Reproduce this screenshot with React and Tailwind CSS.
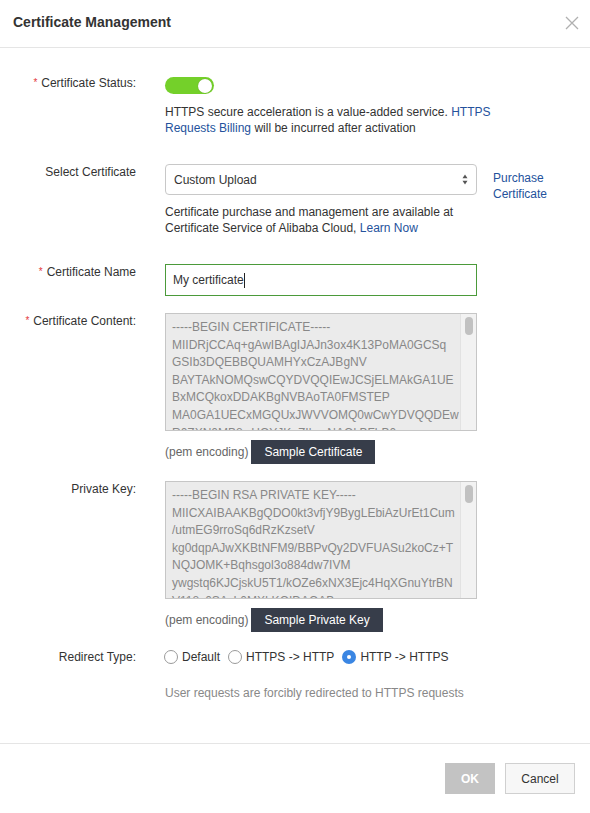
import React from "react";

const certLines = [
  "-----BEGIN CERTIFICATE-----",
  "MIIDRjCCAq+gAwIBAgIJAJn3ox4K13PoMA0GCSq",
  "GSIb3DQEBBQUAMHYxCzAJBgNV",
  "BAYTAkNOMQswCQYDVQQIEwJCSjELMAkGA1UE",
  "BxMCQkoxDDAKBgNVBAoTA0FMSTEP",
  "MA0GA1UECxMGQUxJWVVOMQ0wCwYDVQQDEw",
  "R0ZXN0MB8wHQYJKoZIhvcNAQkBFhB0",
];

const keyLines = [
  "-----BEGIN RSA PRIVATE KEY-----",
  "MIICXAIBAAKBgQDO0kt3vfjY9BygLEbiAzUrEt1Cum",
  "/utmEG9rroSq6dRzKzsetV",
  "kg0dqpAJwXKBtNFM9/BBPvQy2DVFUASu2koCz+T",
  "NQJOMK+Bqhsgol3o884dw7IVM",
  "ywgstq6KJCjskU5T1/kOZe6xNX3Ejc4HqXGnuYtrBN",
  "V118v0SAvL0MXLKQIDAQAB",
];

function Label({ children, required, className = "" }) {
  return (
    <div className={`w-[136px] shrink-0 text-right text-[12px] leading-[16px] text-[#333] ${className}`}>
      {required && <span className="text-[#e4393c] text-[10px] mr-[4px] align-top">*</span>}
      {children}
    </div>
  );
}

function CodeBox({ lines }) {
  return (
    <div className="relative w-[312px] h-[118px] border border-[#c6c6c6] bg-[#ebebeb] overflow-hidden">
      <div className="pl-[6px] pt-[5px] pr-[18px] text-[12px] leading-[17.6px] text-[#888] whitespace-nowrap">
        {lines.map((l, i) => (
          <div key={i}>{l}</div>
        ))}
      </div>
      <div className="absolute top-0 right-0 w-[16px] h-full bg-[#f2f2f2] border-l border-[#e2e2e2]">
        <div className="ml-[4px] mt-[3px] w-[8px] h-[18px] rounded-full bg-[#c1c1c1]" />
      </div>
    </div>
  );
}

function Radio({ checked, label }) {
  return (
    <label className="flex items-center gap-[4px]">
      {checked ? (
        <span className="w-[14px] h-[14px] rounded-full bg-[#3a86e3] flex items-center justify-center">
          <span className="w-[4px] h-[4px] rounded-full bg-white" />
        </span>
      ) : (
        <span className="w-[14px] h-[14px] rounded-full border border-[#9a9a9a] bg-white" />
      )}
      <span className="text-[12px] leading-[16px] text-[#333]">{label}</span>
    </label>
  );
}

export default function App() {
  return (
    <div className="w-[590px] h-[813px] bg-white flex flex-col font-['Liberation_Sans',Arial,sans-serif] text-[#333]">
      {/* Header */}
      <div className="h-[48px] shrink-0 border-b border-[#e5e5e5] flex items-center justify-between pl-[13px] pr-[11px] pb-[2px]">
        <div className="text-[14px] font-bold text-[#333]">Certificate Management</div>
        <svg width="14" height="14" viewBox="0 0 14 14" className="text-[#b0b0b0]">
          <path d="M1 1 L13 13 M13 1 L1 13" stroke="currentColor" strokeWidth="1.3" fill="none" />
        </svg>
      </div>

      {/* Body */}
      <div className="flex-1 pt-[29px]">
        {/* Certificate Status */}
        <div className="flex">
          <Label required className="-mt-[2px]">Certificate Status:</Label>
          <div className="ml-[29px] w-[330px]">
            <div className="w-[49px] h-[17px] rounded-full bg-[#74d02a] flex items-center justify-end pr-[2px]">
              <div className="w-[14px] h-[14px] rounded-full bg-white shadow-[0_0_1px_rgba(0,0,0,0.3)]" />
            </div>
            <div className="mt-[10px] text-[12px] leading-[16px] text-[#333]">
              HTTPS secure acceleration is a value-added service.{" "}
              <span className="text-[#24529c]">HTTPS Requests Billing</span> will be incurred after activation
            </div>
          </div>
        </div>

        {/* Select Certificate */}
        <div className="flex mt-[28px]">
          <Label>Select Certificate</Label>
          <div className="ml-[29px] w-[312px]">
            <div className="h-[31px] border border-[#c8c8c8] rounded-[4px] bg-white flex items-center justify-between pl-[8px] pr-[8px]">
              <span className="text-[12px] text-[#333]">Custom Upload</span>
              <svg width="6" height="11" viewBox="0 0 6 11">
                <path d="M3 0.5 L5.5 4.2 L0.5 4.2 Z" fill="#555" />
                <path d="M3 10.5 L5.5 6.8 L0.5 6.8 Z" fill="#555" />
              </svg>
            </div>
            <div className="mt-[9px] text-[12px] leading-[16px] text-[#333]">
              Certificate purchase and management are available at Certificate Service of Alibaba Cloud,{" "}
              <span className="text-[#24529c]">Learn Now</span>
            </div>
          </div>
          <div className="ml-[16px] mt-[6px] text-[12px] leading-[16px] text-[#24529c]">
            Purchase
            <br />
            Certificate
          </div>
        </div>

        {/* Certificate Name */}
        <div className="flex mt-[28px]">
          <Label required>Certificate Name</Label>
          <div className="ml-[29px]">
            <div className="w-[312px] h-[32px] border border-[#4b9a3a] bg-white flex items-center pl-[7px]">
              <span className="text-[12px] text-[#333]">My certificate</span>
              <span className="w-px h-[15px] bg-[#222]" />
            </div>
          </div>
        </div>

        {/* Certificate Content */}
        <div className="flex mt-[17px]">
          <Label required>Certificate Content:</Label>
          <div className="ml-[29px]">
            <CodeBox lines={certLines} />
            <div className="mt-[9px] flex items-center">
              <span className="text-[12px] text-[#666]">(pem encoding)</span>
              <button className="ml-[3px] h-[24px] px-[13px] bg-[#373d4a] text-white text-[12px]">
                Sample Certificate
              </button>
            </div>
          </div>
        </div>

        {/* Private Key */}
        <div className="flex mt-[17px]">
          <Label>Private Key:</Label>
          <div className="ml-[29px]">
            <CodeBox lines={keyLines} />
            <div className="mt-[9px] flex items-center">
              <span className="text-[12px] text-[#666]">(pem encoding)</span>
              <button className="ml-[3px] h-[24px] px-[13px] bg-[#373d4a] text-white text-[12px]">
                Sample Private Key
              </button>
            </div>
          </div>
        </div>

        {/* Redirect Type */}
        <div className="flex mt-[17px]">
          <Label>Redirect Type:</Label>
          <div className="ml-[28px]">
            <div className="flex items-center gap-[8px]">
              <Radio label="Default" />
              <Radio label="HTTPS -> HTTP" />
              <Radio checked label="HTTP -> HTTPS" />
            </div>
            <div className="mt-[20px] ml-[1px] text-[12px] leading-[16px] text-[#888]">
              User requests are forcibly redirected to HTTPS requests
            </div>
          </div>
        </div>
      </div>

      {/* Footer */}
      <div className="h-[70px] shrink-0 border-t border-[#e5e5e5] flex items-start justify-end gap-[10px] pt-[19px] pr-[15px]">
        <button className="w-[50px] h-[31px] bg-[#c3c3c3] text-white text-[12px] font-bold">OK</button>
        <button className="w-[70px] h-[31px] bg-[#f7f7f7] border border-[#d0d0d0] text-[#333] text-[12px]">
          Cancel
        </button>
      </div>
    </div>
  );
}
